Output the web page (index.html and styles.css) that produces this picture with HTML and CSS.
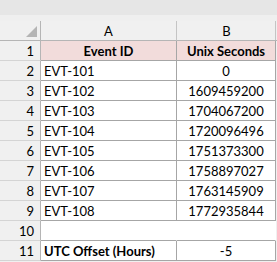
FILE: index.html
```html
<!DOCTYPE html>
<html>
<head>
<meta charset="utf-8">
<link rel="stylesheet" href="styles.css">
</head>
<body>
<div class="sheet">
  <div class="topband"></div>
  <div class="grid">
    <div class="corner"><span class="tri"></span></div>
    <div class="colhead">A</div>
    <div class="colhead">B</div>

    <div class="rowhead">1</div>
    <div class="cell hdr">Event ID</div>
    <div class="cell hdr">Unix Seconds</div>

    <div class="rowhead">2</div>
    <div class="cell">EVT-101</div>
    <div class="cell num">0</div>

    <div class="rowhead">3</div>
    <div class="cell">EVT-102</div>
    <div class="cell num">1609459200</div>

    <div class="rowhead">4</div>
    <div class="cell">EVT-103</div>
    <div class="cell num">1704067200</div>

    <div class="rowhead">5</div>
    <div class="cell">EVT-104</div>
    <div class="cell num">1720096496</div>

    <div class="rowhead">6</div>
    <div class="cell">EVT-105</div>
    <div class="cell num">1751373300</div>

    <div class="rowhead">7</div>
    <div class="cell">EVT-106</div>
    <div class="cell num">1758897027</div>

    <div class="rowhead">8</div>
    <div class="cell">EVT-107</div>
    <div class="cell num">1763145909</div>

    <div class="rowhead">9</div>
    <div class="cell">EVT-108</div>
    <div class="cell num">1772935844</div>

    <div class="rowhead">10</div>
    <div class="cell blank"></div>
    <div class="cell blank"></div>

    <div class="rowhead">11</div>
    <div class="cell bold">UTC Offset (Hours)</div>
    <div class="cell num">-5</div>
  </div>
</div>
</body>
</html>
```
FILE: styles.css
```css
html, body {
  margin: 0;
  padding: 0;
  background: #ffffff;
}
.sheet {
  width: 277px;
  height: 262px;
  overflow: hidden;
  font-family: Lato, "Open Sans", sans-serif;
  font-size: 13px;
  color: #000;
  background: #f0f0f0;
}
.topband {
  height: 21px;
  background: linear-gradient(#e6e6e6 0, #e6e6e6 15px, #efefef 15px);
}
.grid {
  display: grid;
  grid-template-columns: 41px 136px 99px 1px;
  grid-auto-rows: 20px;
}
.grid > div {
  box-sizing: border-box;
}
.grid::after {
  content: none;
}
.corner {
  position: relative;
  background: #f0f0f0;
  border-right: 1px solid #b5b5b5;
  border-bottom: 1px solid #b5b5b5;
}
.tri {
  position: absolute;
  right: 3px;
  bottom: 3px;
  width: 0;
  height: 0;
  border-left: 11px solid transparent;
  border-bottom: 11px solid #b4b4b4;
}
.colhead {
  background: #f0f0f0;
  border-right: 1px solid #c4c4c4;
  border-bottom: 1px solid #b5b5b5;
  text-align: center;
  line-height: 19px;
  padding-top: 1px;
}
.colhead:nth-child(3) {
  grid-column: 3 / span 2;
  border-right: none;
  padding-right: 1px;
}
.colhead:nth-child(3) {
  background: linear-gradient(to right, #f0f0f0 98px, #c4c4c4 98px, #c4c4c4 99px, #f0f0f0 99px);
}
.rowhead {
  grid-column: 1;
  background: #f0f0f0;
  border-right: 1px solid #b5b5b5;
  border-bottom: 1px solid #d4d4d4;
  text-align: right;
  padding-right: 6px;
  line-height: 20px;
}
.cell {
  background: #fff;
  border-right: 1px solid #a6a6a6;
  border-bottom: 1px solid #a6a6a6;
  line-height: 20px;
  padding-left: 3px;
  white-space: nowrap;
  overflow: hidden;
}
.cell:nth-of-type(3n) {
  grid-column: 3;
}
.hdr {
  background: #f2dcdb;
  font-weight: bold;
  text-align: center;
  padding-left: 0;
}
.num {
  grid-column: 3;
  text-align: center;
  padding-left: 0;
}
.bold {
  font-weight: bold;
}
.blank {
  border-right-color: #fff;
  border-bottom-color: #a6a6a6;
}
.blank + .blank {
  border-right: 1px solid #fff;
}
```
